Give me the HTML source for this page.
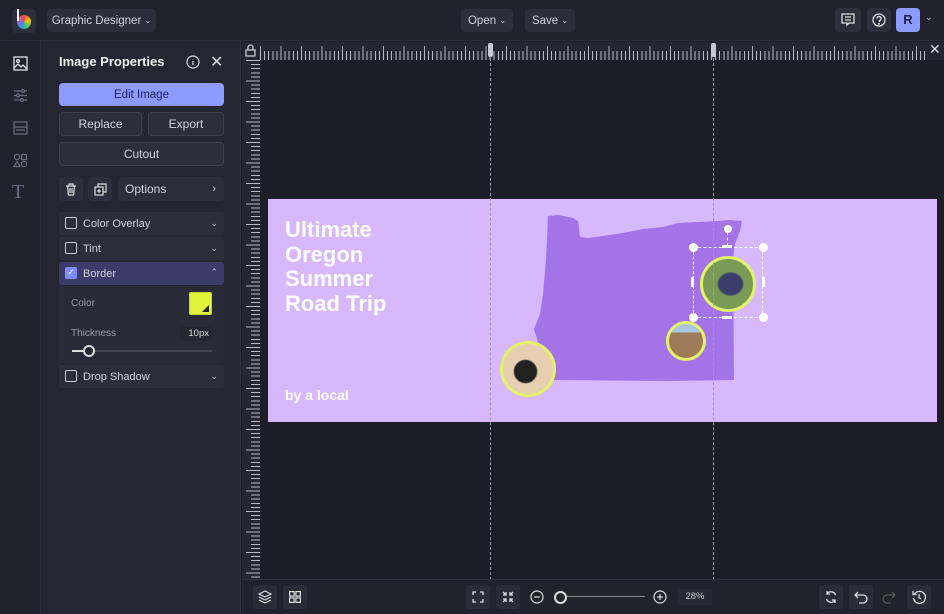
<!DOCTYPE html>
<html><head><meta charset="utf-8"><style>
*{box-sizing:border-box;margin:0;padding:0}
body{width:944px;height:614px;overflow:hidden;background:#1c1d26;font-family:"Liberation Sans",sans-serif;color:#d8d9e0;position:relative}
.abs{position:absolute}
.btn{position:absolute;background:#2c2e3b;border-radius:4px;color:#d0d2dc;font-size:12px;display:flex;align-items:center;justify-content:center}
.btn.o{border:1px solid #3e4050}
.row{position:absolute;left:59px;width:165px;height:23px;background:#2c2e3b;border-radius:3px;font-size:11px;display:flex;align-items:center;padding-left:24px;color:#d0d2dc}
.cb{position:absolute;left:6px;top:5px;width:12px;height:12px;border:1.5px solid #c8cad4;border-radius:2px}
.chev{position:absolute;right:6px;top:6px;font-size:9px;color:#c8cad4}
.ib{position:absolute;width:24px;height:24px;background:#2a2c38;border-radius:3px}
</style></head><body>
<div class="abs" style="left:0;top:0;width:944px;height:41px;background:#21222c;border-bottom:1px solid #2c2d38"></div>
<div class="abs" style="left:12px;top:9px;width:24px;height:24px;background:#2c2e3a;border-radius:4px"></div>
<div class="abs" style="left:17px;top:15px;width:14px;height:14px;border-radius:50%;background:conic-gradient(#e84c3d,#f5c400,#4cc36b,#3b8fe0,#a45be0,#e84c3d)"></div>
<div class="abs" style="left:17px;top:9px;width:2px;height:12px;background:#fff"></div>
<div class="btn" style="left:47px;top:9px;width:109px;height:23px;font-size:11.5px">Graphic Designer&nbsp; <span style="font-size:8px">⌄</span></div>
<div class="btn" style="left:461px;top:9px;width:52px;height:23px;font-size:11.5px">Open&nbsp; <span style="font-size:8px">⌄</span></div>
<div class="btn" style="left:525px;top:9px;width:50px;height:23px;font-size:11.5px">Save&nbsp; <span style="font-size:8px">⌄</span></div>
<div class="btn" style="left:835px;top:8px;width:26px;height:24px"><svg width="14" height="14" viewBox="0 0 14 14" fill="none" stroke="#ddd" stroke-width="1.3"><path d="M1 1h12v9H8l-2 2V10H1z"/><path d="M4 4h6M4 7h6"/></svg></div>
<div class="btn" style="left:867px;top:8px;width:24px;height:24px"><svg width="14" height="14" viewBox="0 0 14 14" fill="none" stroke="#ddd" stroke-width="1.3"><circle cx="7" cy="7" r="6"/><path d="M5 5.5a2 2 0 1 1 2.5 2V9"/><circle cx="7" cy="10.8" r=".4"/></svg></div>
<div class="abs" style="left:896px;top:8px;width:24px;height:24px;background:#8d9aff;border-radius:4px;color:#1e2040;font-weight:bold;font-size:13px;text-align:center;line-height:24px">R</div>
<div class="abs" style="left:925px;top:12px;font-size:9px;color:#ccc">⌄</div>
<div class="abs" style="left:0;top:41px;width:41px;height:573px;background:#21222c;border-right:1px solid #2c2d38"></div>
<svg class="abs" style="left:13px;top:56px" width="15" height="15" viewBox="0 0 15 15" fill="none" stroke="#e0e0e6" stroke-width="1.3"><rect x="1" y="1" width="13" height="13"/><circle cx="5" cy="5" r="1.3"/><path d="M1 12l4-4 3 3 2-2 4 4"/></svg>
<svg class="abs" style="left:13px;top:88px" width="15" height="15" viewBox="0 0 15 15" fill="none" stroke="#6c6e80" stroke-width="1.2"><path d="M1 3h13M1 7.5h13M1 12h13"/><circle cx="10" cy="3" r="1.5" fill="#21222c"/><circle cx="5" cy="7.5" r="1.5" fill="#21222c"/><circle cx="9" cy="12" r="1.5" fill="#21222c"/></svg>
<svg class="abs" style="left:13px;top:121px" width="15" height="14" viewBox="0 0 15 14" fill="none" stroke="#6c6e80" stroke-width="1.2"><rect x="1" y="1" width="13" height="12"/><path d="M1 6h13M3 9h9"/></svg>
<svg class="abs" style="left:13px;top:153px" width="15" height="15" viewBox="0 0 15 15" fill="none" stroke="#6c6e80" stroke-width="1.2"><circle cx="4" cy="4" r="2.6"/><rect x="8.5" y="1.5" width="5" height="5"/><path d="M4 8.5l3 5H1z"/><circle cx="11" cy="11" r="2.6"/></svg>
<div class="abs" style="left:12px;top:181px;font-size:20px;color:#6c6e80;font-family:'Liberation Serif',serif">T</div>
<div class="abs" style="left:41px;top:41px;width:200px;height:573px;background:#252632;border-right:1px solid #30313d"></div>
<div class="abs" style="left:59px;top:54px;font-size:13px;font-weight:bold;color:#eee">Image Properties</div>
<svg class="abs" style="left:186px;top:55px" width="14" height="14" viewBox="0 0 14 14" fill="none" stroke="#ddd" stroke-width="1.2"><circle cx="7" cy="7" r="6"/><path d="M7 6v4M7 4v.5"/></svg>
<div class="abs" style="left:210px;top:52px;font-size:16px;color:#ddd">✕</div>
<div class="btn" style="left:59px;top:83px;width:165px;height:23px;background:#8d9aff;color:#1e2250;font-size:11.5px">Edit Image</div>
<div class="btn o" style="left:59px;top:112px;width:83px;height:24px">Replace</div>
<div class="btn o" style="left:148px;top:112px;width:76px;height:24px">Export</div>
<div class="btn o" style="left:59px;top:142px;width:165px;height:24px">Cutout</div>
<div class="btn" style="left:59px;top:177px;width:24px;height:24px"><svg width="12" height="13" viewBox="0 0 12 13" fill="none" stroke="#ddd" stroke-width="1.2"><path d="M1 3h10M4 3V1h4v2M2.5 3l1 9h5l1-9M5 5v5M7 5v5"/></svg></div>
<div class="btn" style="left:88px;top:177px;width:24px;height:24px"><svg width="13" height="13" viewBox="0 0 13 13" fill="none" stroke="#ddd" stroke-width="1.2"><rect x="1" y="4" width="8" height="8"/><path d="M4 4V1h8v8H9M5 6v4M3 8h4"/></svg></div>
<div class="btn" style="left:118px;top:177px;width:106px;height:24px;justify-content:flex-start;padding-left:7px">Options<span style="position:absolute;right:8px;font-size:11px">›</span></div>
<div class="row" style="top:212px"><div class="cb"></div>Color Overlay<span class="chev">⌄</span></div>
<div class="row" style="top:237px"><div class="cb"></div>Tint<span class="chev">⌄</span></div>
<div class="row" style="top:262px;background:#3b3c6a"><div class="cb" style="background:#7e8cff;border-color:#7e8cff;color:#fff;font-size:9px;line-height:9px;text-align:center">✓</div>Border<span class="chev" style="top:5px">⌃</span></div>
<div class="abs" style="left:59px;top:286px;width:165px;height:77px;background:#2a2b38"></div>
<div class="abs" style="left:71px;top:298px;font-size:10px;color:#9a9cab">Color</div>
<div class="abs" style="left:189px;top:292px;width:23px;height:23px;background:#e0f53a;border-radius:2px;border:1px solid #c6d830"></div>
<div class="abs" style="left:202px;top:305px;width:0;height:0;border-left:7px solid transparent;border-bottom:7px solid #222"></div>
<div class="abs" style="left:71px;top:328px;font-size:10px;color:#9a9cab">Thickness</div>
<div class="abs" style="left:180px;top:327px;width:32px;height:14px;background:#252632;font-size:9.5px;color:#ddd;text-align:right;padding-right:3px;line-height:14px">10px</div>
<div class="abs" style="left:72px;top:350px;width:140px;height:2px;background:#454757"></div>
<div class="abs" style="left:72px;top:350px;width:14px;height:2px;background:#ddd"></div>
<div class="abs" style="left:83px;top:345px;width:12px;height:12px;border-radius:50%;border:2px solid #ddd;background:#252632"></div>
<div class="row" style="top:365px"><div class="cb"></div>Drop Shadow<span class="chev">⌄</span></div>
<div class="abs" style="left:242px;top:42px;width:702px;height:18px;background:#252632"></div>
<div class="abs" style="left:260px;top:51px;width:666px;height:9px;background:repeating-linear-gradient(90deg,#b8b9c4 0 1px,transparent 1px 4.1px)"></div>
<div class="abs" style="left:260px;top:46px;width:666px;height:14px;background:repeating-linear-gradient(90deg,#b8b9c4 0 1px,transparent 1px 20.5px);opacity:.9"></div>
<div class="abs" style="left:242px;top:60px;width:18px;height:520px;background:#252632"></div>
<div class="abs" style="left:251px;top:60px;width:9px;height:520px;background:repeating-linear-gradient(180deg,#b8b9c4 0 1px,transparent 1px 4.1px)"></div>
<div class="abs" style="left:246px;top:60px;width:14px;height:520px;background:repeating-linear-gradient(180deg,#b8b9c4 0 1px,transparent 1px 20.5px)"></div>
<svg class="abs" style="left:245px;top:44px" width="11" height="13" fill="none" stroke="#ccc" stroke-width="1.3"><rect x="1" y="6" width="9" height="6"/><path d="M3 6V3.5a2.5 2.5 0 0 1 5 0V6"/></svg>
<div class="abs" style="left:929px;top:41px;font-size:14px;color:#ddd">✕</div>
<div class="abs" style="left:488px;top:43px;width:5px;height:14px;background:#c8c9d2;border-radius:2px"></div>
<div class="abs" style="left:711px;top:43px;width:5px;height:14px;background:#c8c9d2;border-radius:2px"></div>
<div class="abs" style="left:268px;top:199px;width:669px;height:223px;background:#d8b8fc"></div>
<svg class="abs" style="left:268px;top:199px" width="669" height="223" viewBox="0 0 669 223">
<path d="M280 17l10-1 15 3 5 3 2 16 8 1 15-2 20-3 20-4 20-2 15-4 20-1 20-1 12-1 12 1-2 10-5 13-2 15 1 121-66 1-110-1-22 1 0-17 4-15-6-20 6-15 3-20 3-35 1-20z" fill="#a374e8"/>
</svg>
<div class="abs" style="left:285px;top:218px;font-size:22px;font-weight:bold;color:#fff;line-height:24.5px">Ultimate<br>Oregon<br>Summer<br>Road Trip</div>
<div class="abs" style="left:285px;top:387px;font-size:14px;font-weight:bold;color:#fff">by a local</div>
<div class="abs" style="left:500px;top:341px;width:56px;height:56px;border-radius:50%;border:3px solid #e4f26a;background:radial-gradient(ellipse at 45% 55%,#222 0 28%,#e6cfb0 32%)"></div>
<div class="abs" style="left:666px;top:321px;width:40px;height:40px;border-radius:50%;border:3px solid #e4f26a;background:linear-gradient(#a8c6e0 0 25%,#9e7c5a 25%)"></div>
<div class="abs" style="left:700px;top:256px;width:56px;height:56px;border-radius:50%;border:3px solid #e4f26a;background:radial-gradient(ellipse at 55% 50%,#3b3d6a 0 30%,#7a9a58 35%)"></div>
<div class="abs" style="left:693px;top:247px;width:70px;height:71px;border:1px dashed #fff"></div>
<div class="abs" style="left:689px;top:243px;width:9px;height:9px;border-radius:50%;background:#fff"></div>
<div class="abs" style="left:759px;top:243px;width:9px;height:9px;border-radius:50%;background:#fff"></div>
<div class="abs" style="left:689px;top:313px;width:9px;height:9px;border-radius:50%;background:#fff"></div>
<div class="abs" style="left:759px;top:313px;width:9px;height:9px;border-radius:50%;background:#fff"></div>
<div class="abs" style="left:724px;top:225px;width:8px;height:8px;border-radius:50%;background:#fff"></div>
<div class="abs" style="left:727px;top:232px;width:1px;height:14px;border-left:1px dashed #fff"></div>
<div class="abs" style="left:722px;top:245px;width:10px;height:3px;background:#fff"></div>
<div class="abs" style="left:722px;top:316px;width:10px;height:3px;background:#fff"></div>
<div class="abs" style="left:691px;top:277px;width:3px;height:10px;background:#fff"></div>
<div class="abs" style="left:762px;top:277px;width:3px;height:10px;background:#fff"></div>
<div class="abs" style="left:490px;top:58px;width:0;height:522px;border-left:1px dashed #9a9aa8"></div>
<div class="abs" style="left:713px;top:58px;width:0;height:522px;border-left:1px dashed #9a9aa8"></div>
<div class="abs" style="left:242px;top:579px;width:702px;height:35px;background:#21222c;border-top:1px solid #30313d"></div>
<div class="ib" style="left:253px;top:585px"></div><svg class="abs" style="left:258px;top:590px" width="14" height="14" fill="none" stroke="#ddd" stroke-width="1.2"><path d="M7 1l6 3-6 3-6-3z M1 7l6 3 6-3 M1 10l6 3 6-3"/></svg>
<div class="ib" style="left:283px;top:585px"></div><svg class="abs" style="left:289px;top:591px" width="12" height="12" fill="none" stroke="#ddd" stroke-width="1.2"><rect x=".6" y=".6" width="4.5" height="4.5"/><rect x="6.9" y=".6" width="4.5" height="4.5"/><rect x=".6" y="6.9" width="4.5" height="4.5"/><rect x="6.9" y="6.9" width="4.5" height="4.5"/></svg>
<div class="ib" style="left:466px;top:585px"></div><svg class="abs" style="left:472px;top:591px" width="12" height="12" fill="none" stroke="#ddd" stroke-width="1.3"><path d="M1 4V1h3M8 1h3v3M11 8v3H8M4 11H1V8"/></svg>
<div class="ib" style="left:496px;top:585px"></div><svg class="abs" style="left:502px;top:591px" width="12" height="12" fill="none" stroke="#ddd" stroke-width="1.3"><path d="M1 1l3 3M4 1v3H1M11 1L8 4M8 1v3h3M1 11l3-3M1 8h3v3M11 11L8 8M11 8H8v3"/></svg>
<svg class="abs" style="left:530px;top:590px" width="14" height="14" fill="none" stroke="#ddd" stroke-width="1.2"><circle cx="7" cy="7" r="6"/><path d="M4 7h6"/></svg>
<div class="abs" style="left:560px;top:596px;width:85px;height:1px;background:#888"></div>
<div class="abs" style="left:554px;top:591px;width:13px;height:13px;border-radius:50%;border:2px solid #ddd;background:#21222c"></div>
<svg class="abs" style="left:653px;top:590px" width="14" height="14" fill="none" stroke="#ddd" stroke-width="1.2"><circle cx="7" cy="7" r="6"/><path d="M4 7h6M7 4v6"/></svg>
<div class="abs" style="left:678px;top:589px;width:34px;height:16px;background:#272834;font-size:9.5px;color:#ccc;text-align:center;line-height:16px">28%</div>
<div class="ib" style="left:819px;top:585px"></div><svg class="abs" style="left:824px;top:590px" width="14" height="14" fill="none" stroke="#ddd" stroke-width="1.3"><path d="M11.5 5A5 5 0 0 0 3 3.5M2.5 9A5 5 0 0 0 11 10.5M3 1v3h3M11 13v-3H8"/></svg>
<div class="ib" style="left:849px;top:585px"></div><svg class="abs" style="left:854px;top:590px" width="14" height="14" fill="none" stroke="#ddd" stroke-width="1.3"><path d="M4 2L1 5l3 3M1 5h8a4 4 0 0 1 0 8H5"/></svg>
<svg class="abs" style="left:882px;top:590px" width="14" height="14" fill="none" stroke="#555" stroke-width="1.3"><path d="M10 2l3 3-3 3M13 5H5a4 4 0 0 0 0 8h4"/></svg>
<div class="ib" style="left:907px;top:585px"></div><svg class="abs" style="left:912px;top:590px" width="14" height="14" fill="none" stroke="#ddd" stroke-width="1.3"><path d="M2.5 4A6 6 0 1 1 1.5 8M1 1v3.5h3.5M7 4v3.5l2 1.5"/></svg>
</body></html>
